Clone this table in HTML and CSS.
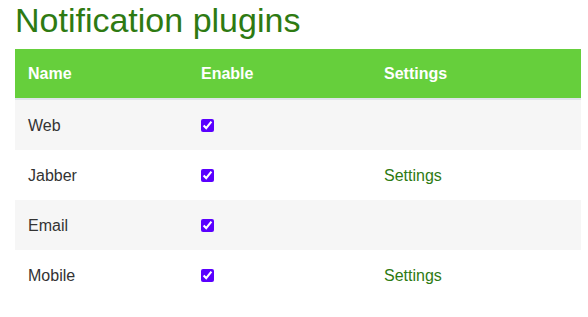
FILE: index.html
```html
<!DOCTYPE html>
<html lang="en">
<head>
    <meta charset="UTF-8">
    <title>Notification plugins</title>
    <link rel="stylesheet" href="styles.css">
</head>
<body>
<h1>Notification plugins</h1>

<table class="plugins">
    <thead>
    <tr>
        <th class="col-name">Name</th>
        <th class="col-enable">Enable</th>
        <th class="col-settings">Settings</th>
    </tr>
    </thead>
    <tbody>
    <tr>
        <td>Web</td>
        <td><input type="checkbox" checked></td>
        <td></td>
    </tr>
    <tr>
        <td>Jabber</td>
        <td><input type="checkbox" checked></td>
        <td><a href="#">Settings</a></td>
    </tr>
    <tr>
        <td>Email</td>
        <td><input type="checkbox" checked></td>
        <td></td>
    </tr>
    <tr>
        <td>Mobile</td>
        <td><input type="checkbox" checked></td>
        <td><a href="#">Settings</a></td>
    </tr>
    </tbody>
</table>
</body>
</html>
```

FILE: styles.css
```css
body {
    font-family: "Liberation Sans", Arial, sans-serif;
    font-size: 16px;
    color: #333;
    margin: 0;
    padding: 1px 15px 0;
    background: #fff;
}

h1 {
    font-size: 34px;
    font-weight: 400;
    line-height: 39px;
    color: #2e7a12;
    margin: 0 0 9px;
}

.plugins {
    width: 566px;
    border-collapse: collapse;
}

.plugins th, .plugins td {
    text-align: left;
    padding: 0 13px;
    height: 50px;
    vertical-align: middle;
}

.plugins td {
    padding-top: 2px;
    height: 48px;
}

.plugins th {
    height: 49px;
    background: #66cf3c;
    color: #fff;
    font-weight: 700;
    border-bottom: 2px solid #dfe4ea;
}

.col-name { width: 147px; }
.col-enable { width: 157px; }

.plugins tbody tr:nth-child(odd) td {
    background: #f6f6f6;
}

.plugins input[type="checkbox"] {
    margin: 0;
    width: 13px;
    height: 13px;
    accent-color: #5a00ff;
    vertical-align: -1px;
}

.plugins a {
    color: #2e7a12;
    text-decoration: none;
}
```
